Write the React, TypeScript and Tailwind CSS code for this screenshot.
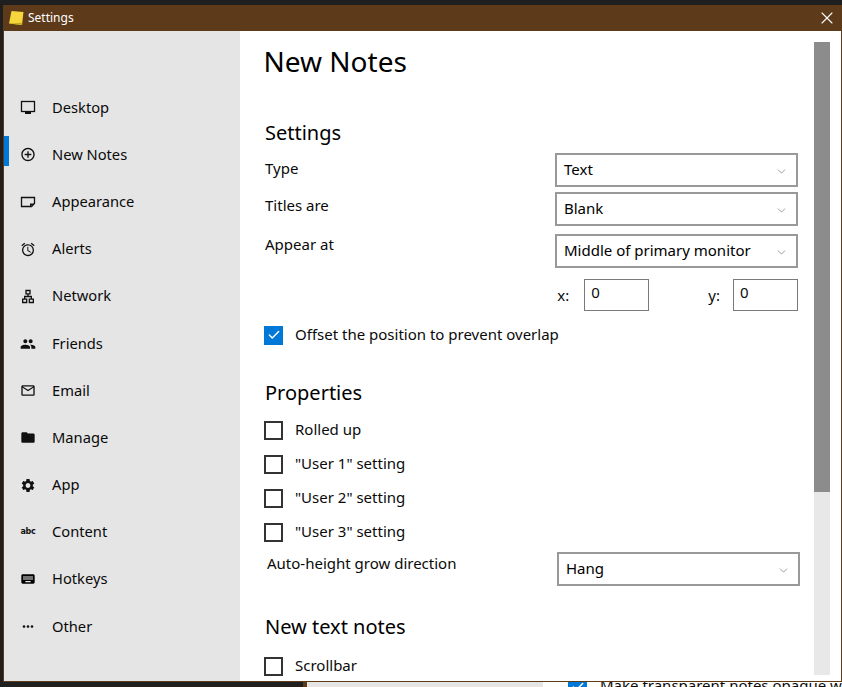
import { ChevronDown, Check, X } from 'lucide-react';
import {
  MdAddCircleOutline,
  MdOutlineAccessAlarm,
  MdPeople,
  MdMailOutline,
  MdFolder,
  MdSettings,
  MdKeyboard,
  MdMoreHoriz,
  MdOutlineLan,
} from 'react-icons/md';

const MonitorIcon = () => (
  <svg viewBox="0 0 16 16" className="w-4 h-4">
    <rect x="1.5" y="1.5" width="13" height="10" fill="none" stroke="#111" strokeWidth="1.3" />
    <rect x="5" y="12" width="6" height="2" fill="#111" />
  </svg>
);

const NoteIcon = () => (
  <svg viewBox="0 0 16 16" className="w-4 h-4">
    <path d="M1.5 3.5h13v6l-3 3h-10z" fill="none" stroke="#111" strokeWidth="1.3" />
    <path d="M10 12.5v-3h4.5z" fill="#111" />
  </svg>
);

const navItems = [
  { label: 'Desktop', icon: <MonitorIcon /> },
  { label: 'New Notes', icon: <MdAddCircleOutline size={19} />, active: true },
  { label: 'Appearance', icon: <NoteIcon /> },
  { label: 'Alerts', icon: <MdOutlineAccessAlarm size={19} /> },
  { label: 'Network', icon: <MdOutlineLan size={19} /> },
  { label: 'Friends', icon: <MdPeople size={20} /> },
  { label: 'Email', icon: <MdMailOutline size={19} /> },
  { label: 'Manage', icon: <MdFolder size={19} /> },
  { label: 'App', icon: <MdSettings size={19} /> },
  { label: 'Content', icon: <span className="font-['DejaVu_Sans',sans-serif] font-bold text-[8px] tracking-[-0.3px]">abc</span> },
  { label: 'Hotkeys', icon: <MdKeyboard size={20} color="#000" /> },
  { label: 'Other', icon: <MdMoreHoriz size={19} /> },
];

const Select = ({ value, className = '' }: { value: string; className?: string }) => (
  <div className={`w-[243px] h-[34px] border-2 border-[#999] bg-white flex items-center justify-between pl-[7px] pr-[8px] text-black ${className}`}>
    <span className="pb-[2px]">{value}</span>
    <ChevronDown className="w-[13px] h-[13px] mt-[2px] text-[#666]" strokeWidth={1.2} />
  </div>
);

const CheckRow = ({ label, checked, className = '' }: { label: string; checked?: boolean; className?: string }) => (
  <div className={`flex items-center gap-[12px] h-[20px] ${className}`}>
    {checked ? (
      <div className="w-[19px] h-[19px] bg-[#0078d7] flex items-center justify-center">
        <Check className="w-[14px] h-[14px] text-white" strokeWidth={2.5} />
      </div>
    ) : (
      <div className="w-[19px] h-[19px] border-2 border-[#333] bg-white" />
    )}
    <span className="pb-[2px]">{label}</span>
  </div>
);

const App = () => {
  return (
    <div className="relative w-[842px] h-[687px] bg-[#1f1f1f] overflow-hidden font-['Noto_Sans',sans-serif] text-[15px] text-[#0a0a0a]">
      {/* window behind */}
      <div className="absolute left-[303px] top-[670px] w-[600px] h-[60px] border-l-[4px] border-[#5c3a1a] flex bg-white">
        <div className="w-[236px] bg-[#e5e5e5]" />
        <div className="flex items-start gap-[13px] pl-[25px] pt-[4px]">
          <div className="w-[19px] h-[19px] bg-[#0078d7] flex items-center justify-center mt-[3px]">
            <Check className="w-[14px] h-[14px] text-white" strokeWidth={2.5} />
          </div>
          <span className="whitespace-nowrap">Make transparent notes opaque when</span>
        </div>
      </div>

      {/* settings window */}
      <div className="absolute left-[3px] top-[5px] w-[839px] h-[677px] border border-[#5c3a1a] border-t-0 flex flex-col bg-white">
        <div className="h-[26px] shrink-0 bg-[#5c3a1a] flex items-center justify-between pl-[4px] pr-[4px] text-white text-[12px]">
          <div className="flex items-center gap-[4px]">
            <svg viewBox="0 0 16 16" className="w-[16px] h-[16px]">
              <path d="M3.5 1 15.5 2 14 15 1 13.5z" fill="#f5d63d" />
              <path d="M1 13.5 14 15l.3-2.2z" fill="#c9a820" />
            </svg>
            <span>Settings</span>
          </div>
          <X className="w-[20px] h-[20px]" strokeWidth={1.3} />
        </div>

        <div className="flex flex-1 min-h-0">
          <nav className="w-[236px] shrink-0 bg-[#e5e5e5] pt-[53px] text-[14.7px]">
            {navItems.map((item) => (
              <div key={item.label} className="relative h-[47.2px] flex items-center pl-[16px]">
                {item.active && <div className="absolute left-0 top-[5px] w-[5px] h-[30px] bg-[#0078d7]" />}
                <div className="w-[16px] h-[16px] flex items-center justify-center text-[#111]">{item.icon}</div>
                <span className="ml-[16px] pb-[2px]">{item.label}</span>
              </div>
            ))}
          </nav>

          <main className="flex-1 min-w-0 flex pt-[11px] overflow-hidden">
            <div className="w-[574px] shrink-0 pl-[24px]">
              <h1 className="text-[28px] leading-[38px] -ml-[0.5px] text-black">New Notes</h1>

              <h2 className="text-[20px] leading-[28px] mt-[39px] ml-[1px] text-black">Settings</h2>
              <div className="w-[533px] ml-[1px] mt-[6px] flex flex-col">
                <div className="flex justify-between items-start h-[39px]">
                  <span className="leading-[20px] pt-[5px]">Type</span>
                  <Select value="Text" />
                </div>
                <div className="flex justify-between items-start h-[42px]">
                  <span className="leading-[20px] pt-[3px]">Titles are</span>
                  <Select value="Blank" />
                </div>
                <div className="flex justify-between items-start h-[45px]">
                  <span className="leading-[20px]">Appear at</span>
                  <Select value="Middle of primary monitor" />
                </div>
                <div className="flex justify-end items-center h-[32px]">
                  <span className="mr-[15px]">x:</span>
                  <div className="w-[65px] h-[32px] border border-[#7a7a7a] pl-[6px] pb-[5px] flex items-center">0</div>
                  <span className="ml-[59px] mr-[13px]">y:</span>
                  <div className="w-[65px] h-[32px] border border-[#7a7a7a] pl-[6px] pb-[5px] flex items-center">0</div>
                </div>
              </div>

              <CheckRow label="Offset the position to prevent overlap" checked className="mt-[14px]" />

              <h2 className="text-[20px] leading-[28px] mt-[34px] ml-[1px] text-black">Properties</h2>
              <div className="flex flex-col gap-[14px] mt-[13px]">
                <CheckRow label="Rolled up" />
                <CheckRow label={'"User 1" setting'} />
                <CheckRow label={'"User 2" setting'} />
                <CheckRow label={'"User 3" setting'} />
              </div>
              <div className="flex justify-between items-start w-[533px] ml-[3px] mt-[10px]">
                <span className="leading-[20px] pt-[1px]">Auto-height grow direction</span>
                <Select value="Hang" />
              </div>

              <h2 className="text-[20px] leading-[28px] mt-[27px] ml-[1px] text-black">New text notes</h2>
              <CheckRow label="Scrollbar" className="mt-[15px]" />
            </div>

            <div className="w-[16px] h-[633px] bg-[#e8e8e8] shrink-0">
              <div className="h-[450px] bg-[#8c8c8c]" />
            </div>
          </main>
        </div>
      </div>
    </div>
  );
};

export default App;
